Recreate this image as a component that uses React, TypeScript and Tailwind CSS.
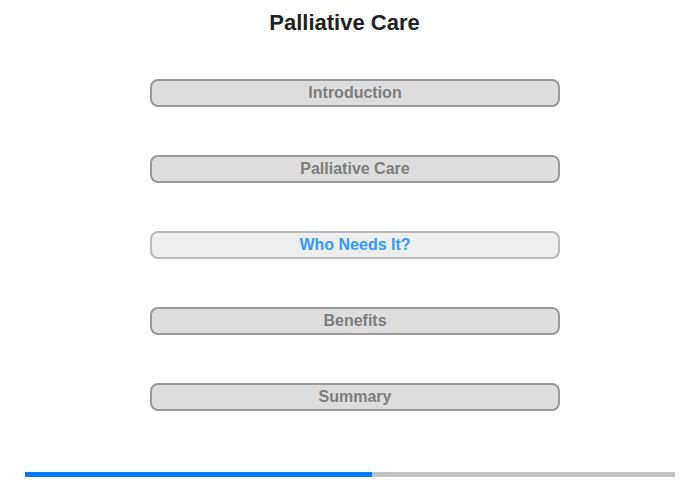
import React from 'react';

const sections = ['Introduction', 'Palliative Care', 'Who Needs It?', 'Benefits', 'Summary'];
const active = 2;

const App: React.FC = () => {
  return (
    <div className="w-[700px] h-[480px] bg-white flex flex-col items-start font-['Liberation_Sans',Arial,sans-serif]">
      <h1 className="mt-[10px] w-[689px] text-center h-[26px] leading-[26px] text-[22px] font-bold text-[#222]">Palliative Care</h1>
      <div className="mt-[43px] ml-[150px] flex flex-col gap-[48px]">
        {sections.map((s, i) => (
          <div
            key={s}
            className={
              i === active
                ? 'w-[410px] h-[28px] rounded-[8px] border-2 border-[#bbbbbb] bg-[#eeeeee] text-[#3399ff] text-[16px] font-bold flex items-center justify-center'
                : 'w-[410px] h-[28px] rounded-[8px] border-2 border-[#999999] bg-[#dddddd] text-[#7d7d7d] text-[16px] font-bold flex items-center justify-center'
            }
          >
            {s}
          </div>
        ))}
      </div>
      <div className="mt-[61px] ml-[25px] w-[650px] h-[5px] flex bg-[#c2c2c2]">
        <div className="w-[347px] h-full bg-[#007bff]" />
      </div>
    </div>
  );
};

export default App;
